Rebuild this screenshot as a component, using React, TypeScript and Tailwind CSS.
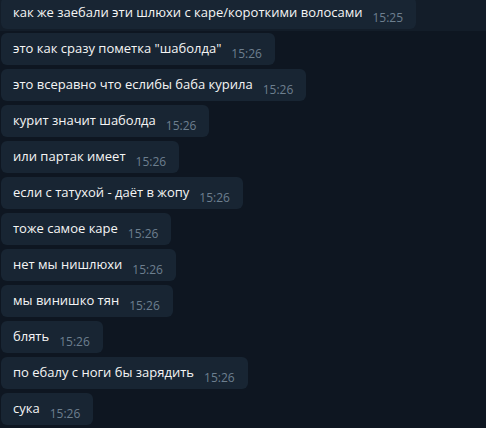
const messages = [
  { text: "это как сразу пометка \"шаболда\"", time: "15:26" },
  { text: "это всеравно что еслибы баба курила", time: "15:26" },
  { text: "курит значит шаболда", time: "15:26" },
  { text: "или партак имеет", time: "15:26" },
  { text: "если с татухой - даёт в жопу", time: "15:26" },
  { text: "тоже самое каре", time: "15:26" },
  { text: "нет мы нишлюхи", time: "15:26" },
  { text: "мы винишко тян", time: "15:26" },
  { text: "блять", time: "15:26" },
  { text: "по ебалу с ноги бы зарядить", time: "15:26" },
  { text: "сука", time: "15:26" },
];

function Bubble({ text, time }: { text: string; time: string }) {
  return (
    <div className="ml-[1px] flex h-8 w-fit items-center rounded-md bg-[#182533] pl-3 pr-[13px]">
      <span className="text-[13px] text-[#f5f5f5]">{text}</span>
      <span className="ml-[10px] mt-[9px] text-[12px] text-[#6d7f8f]">{time}</span>
    </div>
  );
}

export default function App() {
  return (
    <div
      className="h-[428px] w-[486px] overflow-hidden bg-[#0e1621]"
      style={{ fontFamily: '"Open Sans", sans-serif' }}
    >
      <div className="h-[31px] w-full overflow-hidden bg-[#131d29]">
        <div className="-mt-[3px]">
          <Bubble text="как же заебали эти шлюхи с каре/короткими волосами" time="15:25" />
        </div>
      </div>
      <div className="mt-[2px] flex flex-col gap-1">
        {messages.map((m, i) => (
          <Bubble key={i} text={m.text} time={m.time} />
        ))}
      </div>
    </div>
  );
}
